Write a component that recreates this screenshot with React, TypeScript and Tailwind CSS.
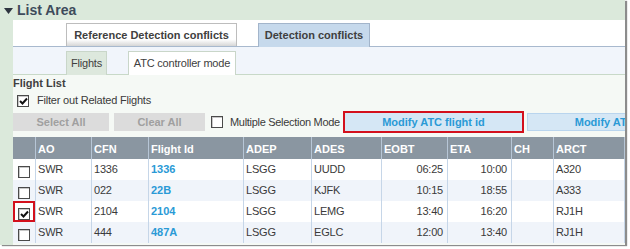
import React from "react"

type Row = {
  ao: string
  cfn: string
  fid: string
  adep: string
  ades: string
  eobt: string
  eta: string
  ch: string
  arct: string
  checked?: boolean
  hl?: boolean
}

const rows: Row[] = [
  { ao: "SWR", cfn: "1336", fid: "1336", adep: "LSGG", ades: "UUDD", eobt: "06:25", eta: "10:00", ch: "", arct: "A320" },
  { ao: "SWR", cfn: "022", fid: "22B", adep: "LSGG", ades: "KJFK", eobt: "10:15", eta: "18:55", ch: "", arct: "A333" },
  { ao: "SWR", cfn: "2104", fid: "2104", adep: "LSGG", ades: "LEMG", eobt: "13:40", eta: "16:20", ch: "", arct: "RJ1H", checked: true, hl: true },
  { ao: "SWR", cfn: "444", fid: "487A", adep: "LSGG", ades: "EGLC", eobt: "12:00", eta: "13:40", ch: "", arct: "RJ1H" },
]

const headers = ["", "AO", "CFN", "Flight Id", "ADEP", "ADES", "EOBT", "ETA", "CH", "ARCT", ""]

function Check({ checked }: { checked?: boolean }) {
  return (
    <span className="flex h-[12px] w-[12px] shrink-0 items-center justify-center border border-[#4a4a4a] bg-white shadow-[inset_1px_1px_0_#c8c8c8]">
      {checked && (
        <svg width="9" height="8" viewBox="0 0 9 8">
          <path d="M1 4 L3.5 6.5 L8 1.5" stroke="#111" strokeWidth="2" fill="none" />
        </svg>
      )}
    </span>
  )
}

const cols = "grid grid-cols-[22px_56px_57px_95px_68px_70px_66px_64px_42px_71px_60px]"
const cell = "border-l border-[#c6d6e8] pt-[2px]"

export default function App() {
  return (
    <div className="h-[249px] w-[630px] overflow-hidden whitespace-nowrap bg-white font-['Liberation_Sans',Arial,sans-serif] text-[11px] tracking-[-0.2px] text-[#3a3a3a]">
      <div className="flex h-[245px] w-[625px] flex-col overflow-hidden bg-[#dbe9db] shadow-[2px_1px_1px_rgba(0,0,0,0.45)]">
        {/* header */}
        <div className="flex h-[20px] shrink-0 items-center gap-[4px] pl-[4px]">
          <svg width="9" height="6" viewBox="0 0 9 6" className="mt-[1px]">
            <path d="M0 0 H9 L4.5 6 Z" fill="#2e3440" />
          </svg>
          <span className="text-[14px] font-bold leading-none tracking-normal text-[#3e4b5b]">List Area</span>
        </div>

        <div className="flex min-h-0 flex-1">
          <div className="w-[13px] shrink-0" />
          <div className="flex min-w-0 flex-1 flex-col bg-[#f5f9f5]">
            {/* main tabs */}
            <div className="flex h-[27px] shrink-0 items-start gap-[21px] border-b border-[#a8b9ce] bg-white pl-[53px] pt-[3px] font-bold tracking-normal text-[#404040]">
              <div className="flex h-[23px] w-[171px] items-center justify-center border border-b-0 border-[#bdbdbd] bg-[linear-gradient(#ffffff_70%,#d6d6d6)]">
                Reference Detection conflicts
              </div>
              <div className="flex h-[24px] w-[112px] items-center justify-center border border-b-0 border-[#a3b5cb] bg-[#c6d9ec]">
                Detection conflicts
              </div>
            </div>

            {/* sub tabs */}
            <div className="flex h-[28px] shrink-0 items-start gap-[21px] border-b border-[#c8d9c8] bg-[#f1f5fb] pl-[53px] pt-[4px] text-[#404040]">
              <div className="flex h-[24px] w-[41px] items-center justify-center border border-b-0 border-[#c9d6c9] bg-[#dde8dd]">
                Flights
              </div>
              <div className="flex h-[24px] w-[108px] items-center justify-center border border-b-0 border-[#c9d6c9] bg-white">
                ATC controller mode
              </div>
            </div>

            {/* flight list */}
            <div className="pt-[1px] font-bold leading-[14px] tracking-normal text-[#404040]">Flight List</div>
            <div className="flex h-[18px] items-center gap-[8px] pl-[4px] pt-[3px]">
              <Check checked />
              <span>Filter out Related Flights</span>
            </div>

            <div className="mt-[2px] flex h-[24px] items-center font-bold tracking-normal">
              <div className="flex h-[18px] w-[96px] shrink-0 items-center justify-center bg-[#dcdcdc] text-[#a0a0a0]">Select All</div>
              <div className="ml-[5px] flex h-[18px] w-[91px] shrink-0 items-center justify-center bg-[#dcdcdc] text-[#a0a0a0]">Clear All</div>
              <div className="ml-[6px]"><Check /></div>
              <span className="ml-[7px] w-[113px] shrink-0 font-normal tracking-[-0.3px] text-[#3a3a3a]">Multiple Selection Mode</span>
              <div className="flex h-[22px] w-[181px] shrink-0 border-2 border-[#d3101c]">
                <div className="flex flex-1 items-center justify-center bg-[#d5e7f5] text-[#2a9ad6]">Modify ATC flight id</div>
              </div>
              <div className="ml-[3px] flex h-[18px] w-[181px] shrink-0 items-center justify-center border border-[#b9d5ee] bg-[#d5e7f5] text-[#2a9ad6]">
                Modify ATC CFN
              </div>
            </div>

            {/* table */}
            <div className="mt-[3px] overflow-hidden">
              <div className={`${cols} h-[22px] bg-[#8a96a1] font-bold tracking-normal text-white`}>
                {headers.map((h, i) => (
                  <div key={i} className="border-l border-[#b7c6d6] pl-[2px] pt-[4px] first:border-l-0">{h}</div>
                ))}
              </div>
              {rows.map((r, i) => (
                <div key={i} className={`${cols} h-[21px] ${i % 2 ? "bg-[#f0f4fa]" : "bg-white"}`}>
                  <div className="relative flex items-end justify-center pb-[2px]">
                    <Check checked={r.checked} />
                    {r.hl && <div className="absolute inset-0 border-2 border-[#d3101c]" />}
                  </div>
                  <div className={`${cell} pl-[2px]`}>{r.ao}</div>
                  <div className={`${cell} pl-[2px]`}>{r.cfn}</div>
                  <div className={`${cell} pl-[2px] font-bold tracking-normal text-[#2a9ad6]`}>{r.fid}</div>
                  <div className={`${cell} pl-[2px]`}>{r.adep}</div>
                  <div className={`${cell} pl-[2px]`}>{r.ades}</div>
                  <div className={`${cell} pr-[4px] text-right`}>{r.eobt}</div>
                  <div className={`${cell} pr-[4px] text-right`}>{r.eta}</div>
                  <div className={`${cell} pl-[2px]`}>{r.ch}</div>
                  <div className={`${cell} pl-[2px]`}>{r.arct}</div>
                  <div className={`${cell} pl-[2px] text-[#e0a030]`}>2</div>
                </div>
              ))}
            </div>
          </div>
        </div>
      </div>
    </div>
  )
}
